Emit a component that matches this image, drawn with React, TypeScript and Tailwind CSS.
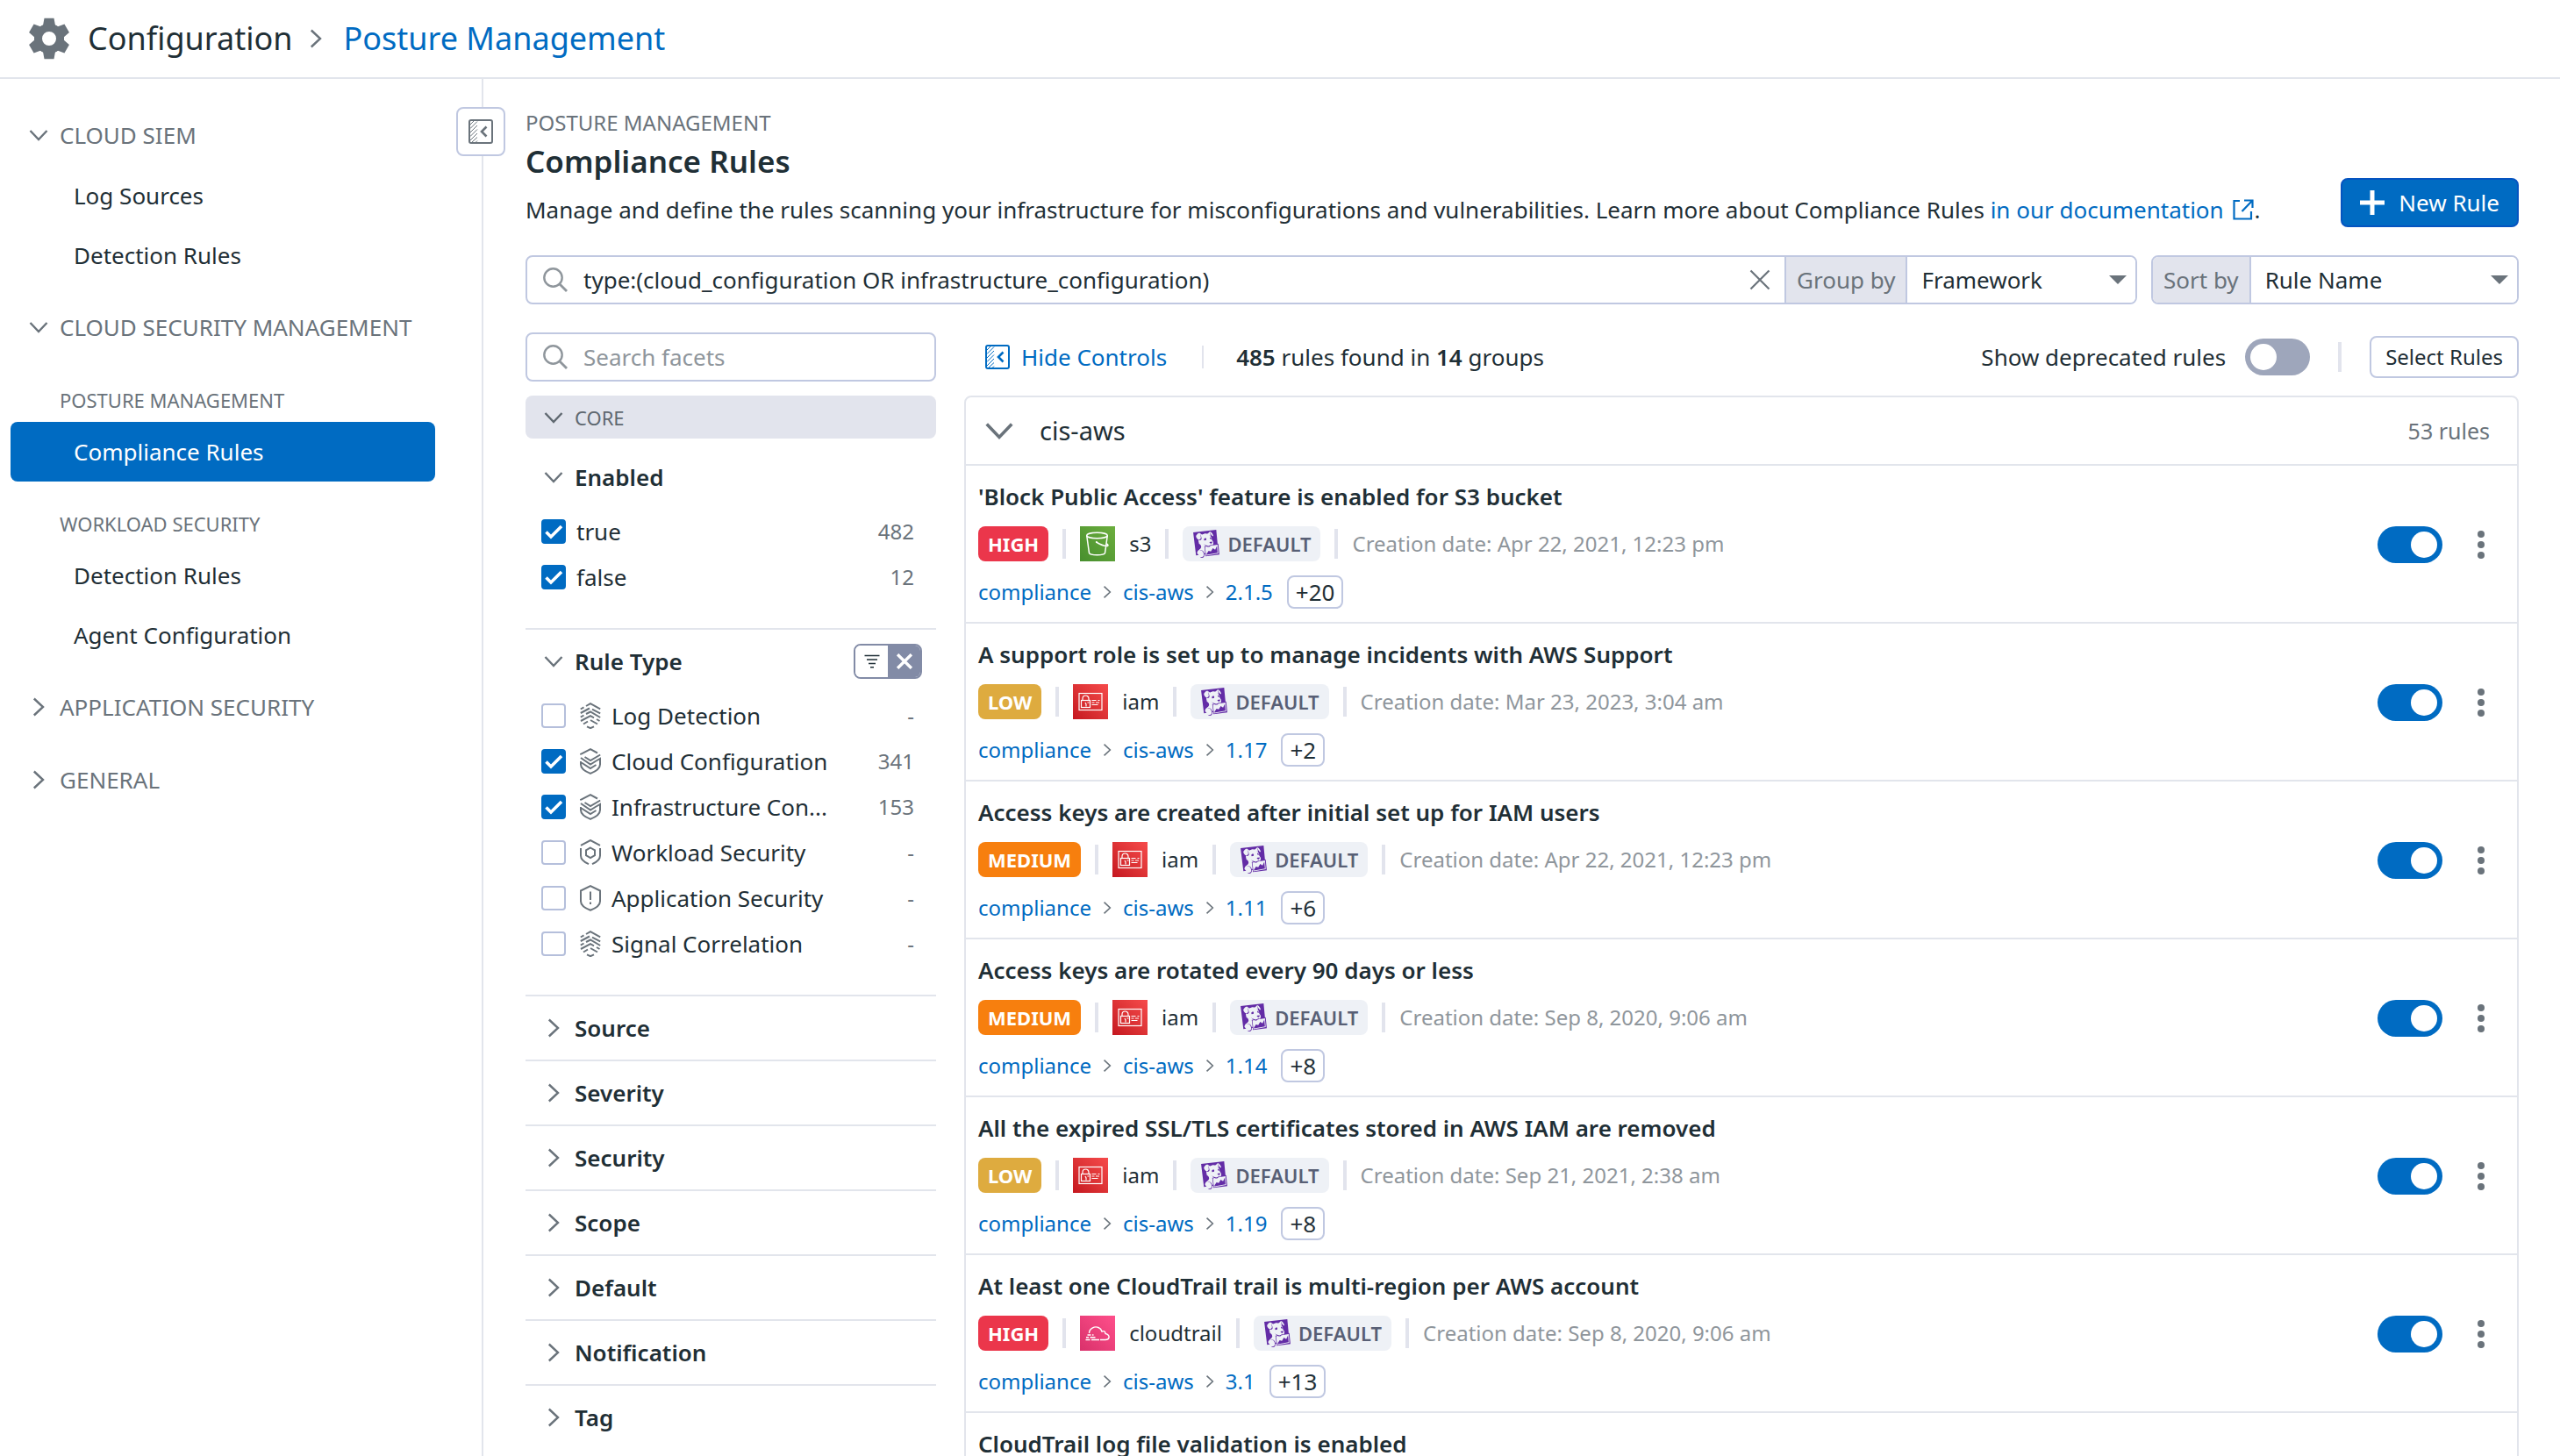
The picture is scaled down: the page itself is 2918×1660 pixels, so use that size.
import React, { useState } from "react";
import { SiDatadog } from "react-icons/si";

/* ---------- icons ---------- */

function GearIcon() {
  return (
    <svg viewBox="-24 -24 48 48" className="size-12 shrink-0 text-[#6a737b]" aria-hidden="true">
      <circle r="12.5" fill="none" stroke="currentColor" strokeWidth="9" />
      {[0, 60, 120, 180, 240, 300].map((angle) => (
        <path
          key={angle}
          d="M-5.5-23.3h11l1.4 7.8 3 2-4.9 3.5h-10l-4.9-3.5 3-2z"
          fill="currentColor"
          transform={`rotate(${angle})`}
        />
      ))}
    </svg>
  );
}

function ChevronRight({ className }: { className: string }) {
  return (
    <svg viewBox="0 0 24 24" className={className} fill="none" stroke="currentColor" strokeWidth="2.4" aria-hidden="true">
      <path d="M6.8 2.5 17 12 6.8 21.5" />
    </svg>
  );
}

function ChevronDown({ className }: { className: string }) {
  return (
    <svg viewBox="0 0 24 24" className={className} fill="none" stroke="currentColor" strokeWidth="2.4" aria-hidden="true">
      <path d="M2.5 7 12 17l9.5-10" />
    </svg>
  );
}

function PanelIcon() {
  return (
    <svg viewBox="0 0 28 28" className="size-7 shrink-0" fill="none" stroke="currentColor" aria-hidden="true">
      <rect x="1" y="1" width="26" height="26" rx="2" strokeWidth="2" />
      <path d="M2 6l4-4M2 10.5l8-8M2 15l8-8M2 19.5l8-8M2 24l8-8M4 26l6-5.5M8 26.5l2-2" strokeWidth="1" />
      <path d="M20.5 8.5 15 14l5.5 5.5" strokeWidth="2.6" />
    </svg>
  );
}

function SearchIcon() {
  return (
    <svg viewBox="0 0 28 28" className="size-7 shrink-0 text-[#8f969c]" fill="none" stroke="currentColor" strokeWidth="2.4" aria-hidden="true">
      <circle cx="11.5" cy="11.5" r="10.2" />
      <path d="m19 19 8 8" strokeWidth="2.8" />
    </svg>
  );
}

function ExternalIcon() {
  return (
    <svg viewBox="0 0 24 24" className="ml-1 inline size-6 align-[-2px]" fill="none" stroke="currentColor" strokeWidth="2.2" aria-hidden="true">
      <path d="M8 2H1.5v20.5H21V14M13 1.5h9.5V10M22 2 10.5 14" />
    </svg>
  );
}

type RuleIconKind = "fingerprint" | "layers" | "hex" | "alert";

function RuleTypeIcon({ kind }: { kind: RuleIconKind }) {
  return (
    <svg viewBox="0 0 24 30" className="h-[30px] w-6 shrink-0 text-[#6a737b]" fill="none" stroke="currentColor" strokeWidth="2" aria-hidden="true">
      {kind === "fingerprint" && (
        <path d="M7 4 12 1.2 23.2 7.4M.8 7.5l3.700-2.100M.8 12 11 6.5M14 7.6l9.200 4.800M.8 16.600l3.700-2.100M7 13l5-2.500L23.200 17M1 21l11-5.800 4 2.100M19 19l3.500 2M4 24.500l5-3M12 20l8 4.500M8 27.300l4 1.900 4-1.900" />
      )}
      {kind === "layers" && (
        <path d="M1 7.5V6.8L12 1.200l8 4.300M5.500 10 12 14 23.200 7.500M1 11l11 7.500 6.500-4M1 16l11 7 6.500-4M1 15v3.500C1 23 6 26.500 12 28.900c6-2.400 11-5.900 11-10.400V12l-4.500 2.500" />
      )}
      {kind === "hex" && (
        <>
          <path d="M1 6.800 12 1l11 5.800M1 10v8.500c0 4 4 7.500 9 9.700M23 10v8.500c0 4-4 7.500-9 9.700" />
          <path d="m12 9.500 5 2.800v5.900L12 21l-5-2.800v-5.900z" />
        </>
      )}
      {kind === "alert" && (
        <>
          <path d="M1 6.500 12 1.200l11 5.300v12c0 4.500-5 8-11 10.300C6 26.500 1 23 1 18.500z" />
          <path d="M12 7.500V17M12 19.500V22" />
        </>
      )}
    </svg>
  );
}

function FilterIcon() {
  return (
    <svg viewBox="0 0 18 16" className="h-4 w-[18px] text-[#1f2f36]" stroke="currentColor" strokeWidth="1.6" aria-hidden="true">
      <path d="M.5 1.5h17M3 6h12M5 10.5h8M7 14.8h4" />
    </svg>
  );
}

function CrossIcon({ className, width }: { className: string; width: number }) {
  return (
    <svg viewBox="0 0 24 24" className={className} stroke="currentColor" strokeWidth={width} aria-hidden="true">
      <path d="m1.5 1.5 21 21M22.5 1.5l-21 21" />
    </svg>
  );
}

type Service = "s3" | "iam" | "cloudtrail";

function ServiceIcon({ service }: { service: Service }) {
  if (service === "s3") {
    return (
      <svg viewBox="0 0 40 40" className="size-10 bg-linear-to-tr from-[#478f2e] to-[#6cae3e]" fill="none" stroke="#fff" strokeWidth="1.5" aria-hidden="true">
        <ellipse cx="19.5" cy="10.5" rx="11.8" ry="3.2" />
        <path d="M7.7 10.5 10.5 30.5c1 3 17 3 18 0L31.3 10.5M18.500 18c3 1.800 9 4.500 12 4.600 2.500 0 1.500-2-.5-2.800" />
        <circle cx="18.8" cy="18" r="1" fill="#fff" stroke="none" />
      </svg>
    );
  }
  if (service === "iam") {
    return (
      <svg viewBox="0 0 40 40" className="size-10 bg-linear-to-tr from-[#c5161f] to-[#f64a4b]" fill="none" stroke="#fff" strokeWidth="1.2" aria-hidden="true">
        <rect x="7" y="10.5" width="26" height="19" />
        <rect x="9.5" y="18.5" width="10" height="8" />
        <path d="M11 18.5V16.5a3.500 3.500 0 0 1 7 0v2M14 21l1 2v2.500M16.500 21h2M21.500 18.500h5M21.500 21h3M26 21h4M21.500 23.500h7M28.500 18.500h2" />
      </svg>
    );
  }
  return (
    <svg viewBox="0 0 40 40" className="size-10 bg-linear-to-tr from-[#d9316b] to-[#ff4f8b]" fill="none" stroke="#fff" strokeWidth="1.4" aria-hidden="true">
      <path d="M10.5 20c0-5 6-8.500 10.500-6.500 2 .8 3.500 2.500 4 4.500 2-1 4 0 4 2.500 3 .5 4.500 2.500 4 4.500-.4 2-2 2.500-4 2.500H23M8.500 22h4M14 22h1.500M7 24.800h3M11.500 24.800h6M6.500 27.500h5M13 27.500h9" />
    </svg>
  );
}

/* ---------- controls ---------- */

function Switch({ label, defaultOn }: { label: string; defaultOn: boolean }) {
  const [on, setOn] = useState(defaultOn);
  return (
    <input
      type="checkbox"
      role="switch"
      aria-label={label}
      checked={on}
      onChange={() => setOn(!on)}
      className="relative h-[42px] w-[74px] shrink-0 cursor-pointer appearance-none rounded-full bg-[#9ea6bb] before:absolute before:left-1.5 before:top-1.5 before:size-[30px] before:rounded-full before:bg-white checked:bg-[#006bc2] checked:before:left-[38px]"
    />
  );
}

function FacetOption({
  label,
  title,
  count,
  defaultChecked,
  icon,
}: {
  label: string;
  title?: string;
  count: string;
  defaultChecked: boolean;
  icon?: RuleIconKind;
}) {
  return (
    <label title={title} className="flex h-[52px] items-center pl-[18px] pr-[25px]">
      <span className="relative grid size-7 shrink-0 place-items-center">
        <input
          type="checkbox"
          defaultChecked={defaultChecked}
          className="peer col-start-1 row-start-1 size-7 appearance-none rounded-[4px] border-2 border-[#b5bfdb] bg-white checked:border-[#006bc2] checked:bg-[#006bc2]"
        />
        <svg viewBox="0 0 28 28" className="pointer-events-none invisible relative col-start-1 row-start-1 size-7 peer-checked:visible" fill="none" stroke="#fff" strokeWidth="3.6" aria-hidden="true">
          <path d="m5.5 14.5 5.5 5.5L23 8" />
        </svg>
      </span>
      {icon && (
        <span className="ml-4 flex">
          <RuleTypeIcon kind={icon} />
        </span>
      )}
      <span className="ml-3 text-[26px] leading-9 whitespace-nowrap">{label}</span>
      <span className="ml-auto text-[24px] leading-9 text-[#6a737b]">{count}</span>
    </label>
  );
}

function FacetHeading({ title, open, children }: { title: string; open: boolean; children?: React.ReactNode }) {
  return (
    <div className="flex h-[72px] items-center justify-between pl-5 pr-4">
      <button type="button" aria-expanded={open} className="flex items-center gap-3 text-[26px] leading-9 font-semibold">
        {open ? <ChevronDown className="size-6 text-[#6a737b]" /> : <ChevronRight className="size-6 text-[#6a737b]" />}
        {title}
      </button>
      {children}
    </div>
  );
}

/* ---------- left navigation ---------- */

function NavSection({ title, open, children }: { title: string; open: boolean; children?: React.ReactNode }) {
  return (
    <section>
      <button
        type="button"
        aria-expanded={open}
        className="flex w-full items-center gap-3 pt-[30px] pr-8 pb-[17px] pl-8 text-[26px] leading-9 text-[#6a737b]"
      >
        {open ? <ChevronDown className="size-6" /> : <ChevronRight className="size-6" />}
        {title}
      </button>
      {children}
    </section>
  );
}

function NavSubheading({ children }: { children: React.ReactNode }) {
  return <h3 className="pt-8 pb-[9px] pl-[68px] text-[22px] leading-8 text-[#6a737b]">{children}</h3>;
}

function NavItem({ children, active = false }: { children: React.ReactNode; active?: boolean }) {
  return (
    <a
      href="#"
      aria-current={active ? "page" : undefined}
      className={
        active
          ? "mr-[53px] ml-3 block rounded-lg bg-[#006bc2] py-4 pl-[72px] text-[26px] leading-9 text-white"
          : "mr-[53px] ml-3 block rounded-lg py-4 pl-[72px] text-[26px] leading-9"
      }
    >
      {children}
    </a>
  );
}

function Sidebar() {
  return (
    <nav aria-label="Configuration" className="relative w-[551px] shrink-0 border-r-2 border-[#e2e5ec] pt-4">
      <NavSection title="CLOUD SIEM" open>
        <NavItem>Log Sources</NavItem>
        <NavItem>Detection Rules</NavItem>
      </NavSection>
      <NavSection title="CLOUD SECURITY MANAGEMENT" open>
        <NavSubheading>POSTURE MANAGEMENT</NavSubheading>
        <NavItem active>Compliance Rules</NavItem>
        <NavSubheading>WORKLOAD SECURITY</NavSubheading>
        <NavItem>Detection Rules</NavItem>
        <NavItem>Agent Configuration</NavItem>
      </NavSection>
      <NavSection title="APPLICATION SECURITY" open={false} />
      <NavSection title="GENERAL" open={false} />
      <button
        type="button"
        aria-label="Collapse navigation"
        className="absolute top-8 right-[-27px] grid size-14 place-items-center rounded-lg border-2 border-[#c0c8e1] bg-white text-[#6a737b]"
      >
        <PanelIcon />
      </button>
    </nav>
  );
}

/* ---------- facets ---------- */

const ruleTypes: { label: string; title?: string; count: string; checked: boolean; icon: RuleIconKind }[] = [
  { label: "Log Detection", count: "-", checked: false, icon: "fingerprint" },
  { label: "Cloud Configuration", count: "341", checked: true, icon: "layers" },
  { label: "Infrastructure Con...", title: "Infrastructure Configuration", count: "153", checked: true, icon: "layers" },
  { label: "Workload Security", count: "-", checked: false, icon: "hex" },
  { label: "Application Security", count: "-", checked: false, icon: "alert" },
  { label: "Signal Correlation", count: "-", checked: false, icon: "fingerprint" },
];

const closedFacets = ["Source", "Severity", "Security", "Scope", "Default", "Notification", "Tag"];

function Facets() {
  return (
    <aside aria-label="Facets" className="w-[468px] shrink-0">
      <div className="flex h-14 items-center gap-[18px] rounded-lg border-2 border-[#c0c8e1] px-[18px]">
        <SearchIcon />
        <input
          type="text"
          aria-label="Search facets"
          placeholder="Search facets"
          className="min-w-0 flex-1 text-[26px] leading-9 outline-none placeholder:text-[#8f969c]"
        />
      </div>
      <button
        type="button"
        aria-expanded="true"
        className="mt-4 flex h-[49px] w-full items-center gap-3 rounded-lg bg-[#e2e4ed] pl-5 text-[22px] leading-8 text-[#5f6870]"
      >
        <ChevronDown className="size-6" />
        CORE
      </button>
      <section className="mt-2 pb-8">
        <FacetHeading title="Enabled" open />
        <FacetOption label="true" count="482" defaultChecked />
        <FacetOption label="false" count="12" defaultChecked />
      </section>
      <section className="border-t-2 border-[#e2e5ec] pb-8">
        <FacetHeading title="Rule Type" open>
          <div className="flex h-10 w-[78px] overflow-hidden rounded-lg border-2 border-[#828ba6]">
            <button type="button" aria-label="Filter" className="grid flex-1 place-items-center bg-white">
              <FilterIcon />
            </button>
            <button type="button" aria-label="Clear filter" className="grid flex-1 place-items-center bg-[#828ba6] text-white">
              <CrossIcon className="size-[18px]" width={4.5} />
            </button>
          </div>
        </FacetHeading>
        {ruleTypes.map((t) => (
          <FacetOption key={t.label} label={t.label} title={t.title} count={t.count} defaultChecked={t.checked} icon={t.icon} />
        ))}
      </section>
      {closedFacets.map((title) => (
        <section key={title} className="border-t-2 border-[#e2e5ec]">
          <FacetHeading title={title} open={false} />
        </section>
      ))}
    </aside>
  );
}

/* ---------- rules ---------- */

type Severity = "HIGH" | "MEDIUM" | "LOW";

const severityClass: Record<Severity, string> = {
  HIGH: "bg-[#eb364b]",
  MEDIUM: "bg-[#f77f0e]",
  LOW: "bg-[#deab3f]",
};

interface Rule {
  title: string;
  severity: Severity;
  service: Service;
  date: string;
  control: string;
  more: string;
}

const rules: Rule[] = [
  { title: "'Block Public Access' feature is enabled for S3 bucket", severity: "HIGH", service: "s3", date: "Apr 22, 2021, 12:23 pm", control: "2.1.5", more: "+20" },
  { title: "A support role is set up to manage incidents with AWS Support", severity: "LOW", service: "iam", date: "Mar 23, 2023, 3:04 am", control: "1.17", more: "+2" },
  { title: "Access keys are created after initial set up for IAM users", severity: "MEDIUM", service: "iam", date: "Apr 22, 2021, 12:23 pm", control: "1.11", more: "+6" },
  { title: "Access keys are rotated every 90 days or less", severity: "MEDIUM", service: "iam", date: "Sep 8, 2020, 9:06 am", control: "1.14", more: "+8" },
  { title: "All the expired SSL/TLS certificates stored in AWS IAM are removed", severity: "LOW", service: "iam", date: "Sep 21, 2021, 2:38 am", control: "1.19", more: "+8" },
  { title: "At least one CloudTrail trail is multi-region per AWS account", severity: "HIGH", service: "cloudtrail", date: "Sep 8, 2020, 9:06 am", control: "3.1", more: "+13" },
  { title: "CloudTrail log file validation is enabled", severity: "LOW", service: "cloudtrail", date: "Sep 8, 2020, 9:06 am", control: "3.2", more: "+10" },
];

function Divider() {
  return <span className="h-[34px] w-1 bg-[#e2e4ed]" />;
}

function RuleRow({ rule }: { rule: Rule }) {
  return (
    <li className="flex items-center border-t-2 border-[#e2e5ec] pt-[17px] pr-[29px] pb-[15px] pl-3.5">
      <div className="flex min-w-0 flex-1 flex-col items-start gap-4">
        <h3 className="text-[26px] leading-9 font-semibold">{rule.title}</h3>
        <div className="flex h-10 items-center gap-4 text-[24px] leading-9">
          <span className={`flex h-10 items-center rounded-lg px-[11px] text-[22px] leading-8 font-bold text-white ${severityClass[rule.severity]}`}>
            {rule.severity}
          </span>
          <Divider />
          <ServiceIcon service={rule.service} />
          <span>{rule.service}</span>
          <Divider />
          <span className="flex h-10 items-center gap-2 rounded-lg bg-[#eef1f6] px-[11px] text-[22px] leading-8 font-semibold text-[#585f75]">
            <SiDatadog className="size-8 text-[#632ca6]" aria-hidden="true" />
            DEFAULT
          </span>
          <Divider />
          <span className="text-[#8f969c]">Creation date: {rule.date}</span>
        </div>
        <div className="flex h-[38px] items-center gap-2.5 text-[24px] leading-8">
          <a href="#" className="text-[#006bc2]">compliance</a>
          <ChevronRight className="size-4 text-[#6a737b]" />
          <a href="#" className="text-[#006bc2]">cis-aws</a>
          <ChevronRight className="size-4 text-[#6a737b]" />
          <a href="#" className="text-[#006bc2]">{rule.control}</a>
          <button type="button" className="ml-1.5 h-[38px] rounded-lg border-2 border-[#c0c8e1] px-2 text-[26px] leading-8">
            {rule.more}
          </button>
        </div>
      </div>
      <Switch label={rule.title} defaultOn />
      <button type="button" aria-label="Rule actions" className="ml-8 flex h-10 w-6 flex-col items-center justify-center gap-1">
        <span className="size-2 rounded-full bg-[#6a737b]" />
        <span className="size-2 rounded-full bg-[#6a737b]" />
        <span className="size-2 rounded-full bg-[#6a737b]" />
      </button>
    </li>
  );
}

function Results() {
  return (
    <div className="min-w-0 flex-1">
      <div className="flex h-14 items-center pl-6 text-[26px] leading-9">
        <button type="button" className="flex items-center gap-[13px] text-[#006bc2]">
          <PanelIcon />
          Hide Controls
        </button>
        <span className="mr-[37px] ml-10 h-[26px] w-0.5 bg-[#e2e4ed]" />
        <p>
          <strong className="font-semibold">485</strong> rules found in <strong className="font-semibold">14</strong> groups
        </p>
        <span className="mr-[22px] ml-auto">Show deprecated rules</span>
        <Switch label="Show deprecated rules" defaultOn={false} />
        <span className="mx-8 h-[34px] w-1 bg-[#e2e4ed]" />
        <button type="button" className="h-12 rounded-lg border-2 border-[#c0c8e1] px-4 text-[24px] leading-9">
          Select Rules
        </button>
      </div>
      <section className="mt-4 rounded-t-lg border-2 border-[#e2e5ec]">
        <header className="flex h-[76px] items-center justify-between pr-[31px] pl-5">
          <button type="button" aria-expanded="true" className="flex items-center gap-7 text-[29px] leading-10">
            <ChevronDown className="size-9 text-[#6a737b]" />
            cis-aws
          </button>
          <span className="text-[25px] leading-9 text-[#6a737b]">53 rules</span>
        </header>
        <ul>
          {rules.map((rule) => (
            <RuleRow key={rule.title} rule={rule} />
          ))}
        </ul>
      </section>
    </div>
  );
}

function LabelledSelect({ id, label, options }: { id: string; label: string; options: string[] }) {
  return (
    <>
      <label htmlFor={id} className="flex shrink-0 items-center border-r-2 border-[#c0c8e1] bg-[#e2e4ed] px-3 text-[26px] leading-9 text-[#6a737b]">
        {label}
      </label>
      <span className="relative flex flex-1">
        <select id={id} className="w-full appearance-none bg-white pl-4 text-[26px] leading-9 outline-none">
          {options.map((o) => (
            <option key={o}>{o}</option>
          ))}
        </select>
        <svg viewBox="0 0 20 10" className="pointer-events-none absolute top-[21px] right-2.5 h-2.5 w-5 text-[#6a737b]" fill="currentColor" aria-hidden="true">
          <path d="M0 0h20L10 10z" />
        </svg>
      </span>
    </>
  );
}

function QueryBar() {
  const [query, setQuery] = useState("type:(cloud_configuration OR infrastructure_configuration)");
  return (
    <div className="flex gap-4">
      <div className="flex h-14 flex-1 overflow-hidden rounded-lg border-2 border-[#c0c8e1]">
        <div className="flex flex-1 items-center gap-[18px] border-r-2 border-[#c0c8e1] pr-3 pl-[18px]">
          <SearchIcon />
          <input
            type="text"
            aria-label="Search rules"
            value={query}
            onChange={(e) => setQuery(e.target.value)}
            className="min-w-0 flex-1 text-[26px] leading-9 outline-none"
          />
          <button type="button" aria-label="Clear search" onClick={() => setQuery("")} className="grid size-8 place-items-center text-[#6a737b]">
            <CrossIcon className="size-6" width={2.2} />
          </button>
        </div>
        <div className="flex w-[398px]">
          <LabelledSelect id="group-by" label="Group by" options={["Framework", "Source", "Severity"]} />
        </div>
      </div>
      <div className="flex h-14 w-[419px] overflow-hidden rounded-lg border-2 border-[#c0c8e1]">
        <LabelledSelect id="sort-by" label="Sort by" options={["Rule Name", "Creation Date"]} />
      </div>
    </div>
  );
}

export default function App() {
  return (
    <div className="flex h-screen flex-col overflow-hidden bg-white font-['Noto_Sans',sans-serif] text-[#1f2f36]">
      <header className="flex h-[90px] shrink-0 items-center border-b-2 border-[#e2e5ec] pl-8 text-[36px] leading-[48px]">
        <GearIcon />
        <a href="#" className="ml-5">Configuration</a>
        <ChevronRight className="mr-5 ml-3.5 size-6 text-[#6a737b]" />
        <a href="#" className="text-[#006bc2]">Posture Management</a>
      </header>
      <div className="flex min-h-0 flex-1">
        <Sidebar />
        <main className="min-w-0 flex-1 pt-8 pr-[47px] pl-12">
          <div className="flex items-end justify-between">
            <div>
              <p className="text-[24px] leading-9 text-[#6a737b]">POSTURE MANAGEMENT</p>
              <h1 className="mt-0.5 text-[35px] leading-[48px] font-semibold">Compliance Rules</h1>
              <p className="mt-[11px] text-[26px] leading-10">
                Manage and define the rules scanning your infrastructure for misconfigurations and vulnerabilities. Learn more about
                Compliance Rules{" "}
                <a href="#" className="text-[#006bc2]">
                  in our documentation <ExternalIcon />
                </a>
                .
              </p>
            </div>
            <button
              type="button"
              className="flex h-14 shrink-0 items-center gap-4 rounded-lg border-2 border-[#0554c0] bg-[#006bc2] px-5 text-[26px] leading-9 text-white"
            >
              <svg viewBox="0 0 28 28" className="size-7" stroke="currentColor" strokeWidth="5" aria-hidden="true">
                <path d="M14 0v28M0 14h28" />
              </svg>
              New Rule
            </button>
          </div>
          <div className="mt-8">
            <QueryBar />
          </div>
          <div className="mt-8 flex gap-8">
            <Facets />
            <Results />
          </div>
        </main>
      </div>
    </div>
  );
}
